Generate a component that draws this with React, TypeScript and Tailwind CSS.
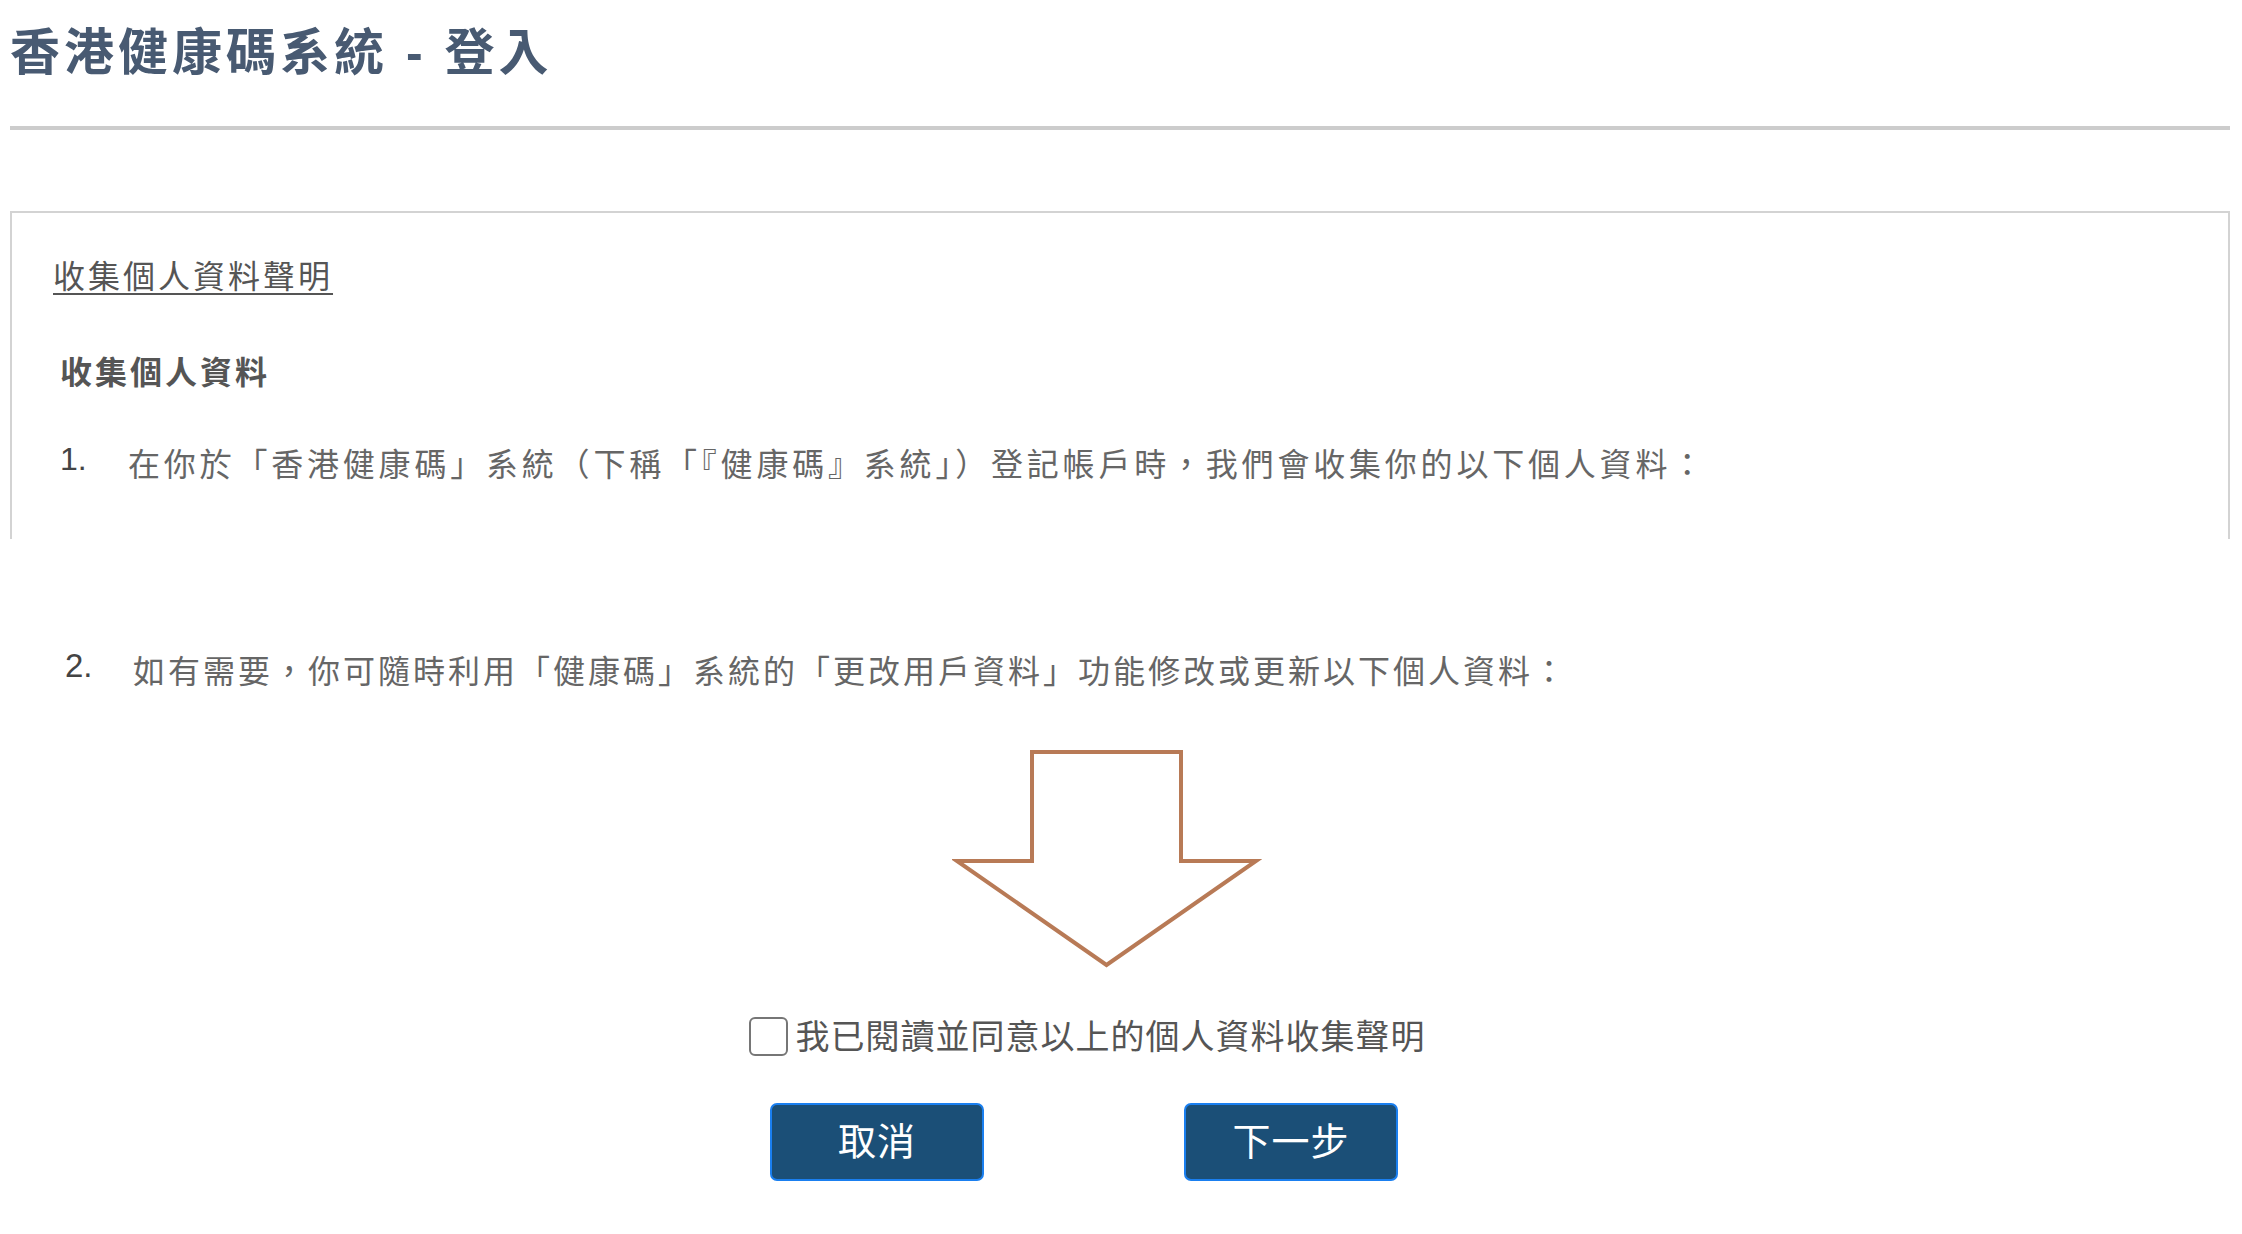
import React, { useState } from 'react';

const FONT = "font-['Liberation_Sans','Noto_Sans_CJK_TC',sans-serif]";

export default function App() {
  const [agreed, setAgreed] = useState(false);

  return (
    <div lang="zh-HK" className={`min-h-screen bg-white ${FONT}`}>
      <div className="mx-[10px] w-[2220px] pt-[28px]">
        <h1 className="text-[50px] leading-none font-bold tracking-[4px] text-[#485a72]">香港健康碼系統 - 登入</h1>
        <div className="mt-[48px] h-[4px] bg-[#cccccc]" />

        {/* statement box */}
        <div className="mt-[81px] h-[328px] border-2 border-b-0 border-[#d3d3d3] pl-[41px] pt-[48px]">
          <h2 className="text-[32px] leading-none tracking-[3px] text-[#555555] underline decoration-2 underline-offset-[5px]">
            收集個人資料聲明
          </h2>
          <h3 className="mt-[64px] ml-[7px] text-[32px] leading-none font-bold tracking-[3px] text-[#555555]">收集個人資料</h3>
          <div className="mt-[54px] ml-[7px] flex items-start">
            <span className="w-[68px] text-[32px] leading-none text-[#444444]">1.</span>
            <p className="mt-[6px] text-[32px] leading-none tracking-[3.8px] text-[#666666]">
              在你於「香港健康碼」系統（下稱「『健康碼』系統」）登記帳戶時，我們會收集你的以下個人資料：
            </p>
          </div>
        </div>

        <div className="mt-[110px] pl-[55px] flex items-start">
          <span className="w-[68px] text-[33px] leading-none text-[#444444]">2.</span>
          <p className="mt-[7px] text-[32px] leading-none tracking-[3px] text-[#666666]">
            如有需要，你可隨時利用「健康碼」系統的「更改用戶資料」功能修改或更新以下個人資料：
          </p>
        </div>

        <div className="mt-[59px] flex justify-center pr-[26px]">
          <svg width="310" height="226" viewBox="0 0 310 226">
            <path
              d="M80 5 H229 V114 H304 L154.5 218 L5 114 H80 Z"
              fill="none"
              stroke="#b87a56"
              strokeWidth="4"
              strokeLinejoin="miter"
            />
          </svg>
        </div>

        <label className="mt-[44px] flex items-center justify-center gap-[8px] pr-[66px] cursor-pointer">
          <input
            type="checkbox"
            checked={agreed}
            onChange={e => setAgreed(e.target.checked)}
            className="appearance-none w-[39px] h-[39px] border-2 border-[#767676] rounded-[6px] bg-white checked:bg-[#1b4f77]"
          />
          <span className="text-[34px] leading-none tracking-[1px] text-[#555555]">我已閱讀並同意以上的個人資料收集聲明</span>
        </label>

        <div className="mt-[47px] flex justify-center gap-[200px] pr-[72px]">
          <button className="w-[214px] h-[78px] bg-[#1b4f77] border-2 border-[#1a7ff0] rounded-[7px] text-white text-[38px] leading-none tracking-[1px]">
            取消
          </button>
          <button className="w-[214px] h-[78px] bg-[#1b4f77] border-2 border-[#1a7ff0] rounded-[7px] text-white text-[38px] leading-none tracking-[1px]">
            下一步
          </button>
        </div>
      </div>
    </div>
  );
}
